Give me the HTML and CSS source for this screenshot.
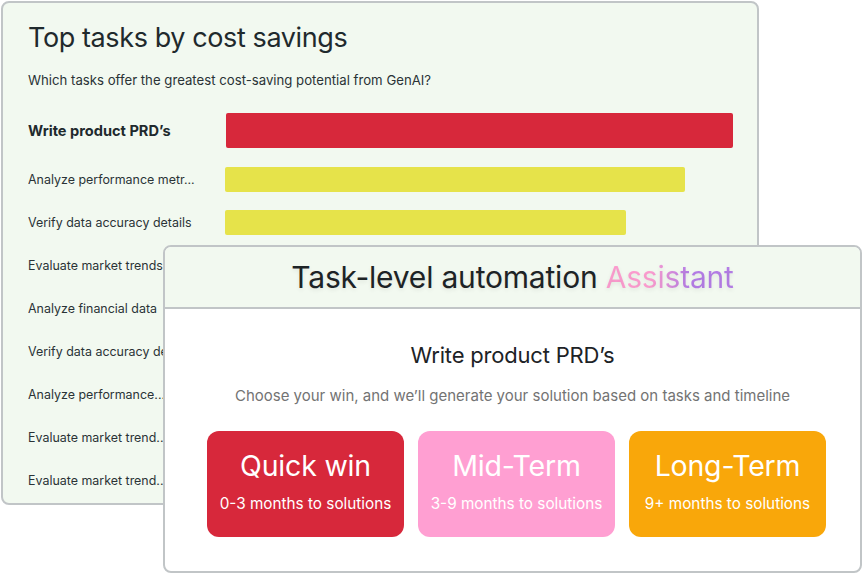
FILE: index.html
```html
<!DOCTYPE html>
<html>
<head>
<meta charset="utf-8">
<link rel="stylesheet" href="styles.css">
</head>
<body>
<div class="stage">
  <section class="chart-card">
    <h1 class="chart-title">Top tasks by cost savings</h1>
    <p class="chart-sub">Which tasks offer the greatest cost-saving potential from GenAI?</p>
    <div class="rows">
      <div class="row row-main"><span class="label label-bold">Write product PRD’s</span><span class="bar bar-red" style="width:507px"></span></div>
      <div class="row"><span class="label">Analyze performance metr...</span><span class="bar bar-yellow" style="width:460px"></span></div>
      <div class="row"><span class="label">Verify data accuracy details</span><span class="bar bar-yellow" style="width:401px"></span></div>
      <div class="row"><span class="label">Evaluate market trends</span><span class="bar bar-yellow" style="width:360px"></span></div>
      <div class="row"><span class="label">Analyze financial data</span><span class="bar bar-yellow" style="width:330px"></span></div>
      <div class="row"><span class="label">Verify data accuracy details</span><span class="bar bar-yellow" style="width:300px"></span></div>
      <div class="row"><span class="label">Analyze performance...</span><span class="bar bar-yellow" style="width:270px"></span></div>
      <div class="row"><span class="label">Evaluate market trend..</span><span class="bar bar-yellow" style="width:240px"></span></div>
      <div class="row"><span class="label">Evaluate market trend..</span><span class="bar bar-yellow" style="width:210px"></span></div>
    </div>
  </section>

  <section class="assist-card">
    <header class="assist-head">
      <h2 class="assist-title">Task-level automation <span class="grad">Assistant</span></h2>
    </header>
    <div class="assist-body">
      <h3 class="task-name">Write product PRD’s</h3>
      <p class="task-sub">Choose your win, and we’ll generate your solution based on tasks and timeline</p>
      <div class="wins">
        <div class="win win-red"><span class="win-title">Quick win</span><span class="win-sub">0-3 months to solutions</span></div>
        <div class="win win-pink"><span class="win-title">Mid-Term</span><span class="win-sub">3-9 months to solutions</span></div>
        <div class="win win-orange"><span class="win-title">Long-Term</span><span class="win-sub">9+ months to solutions</span></div>
      </div>
    </div>
  </section>
</div>
</body>
</html>
```
FILE: styles.css
```css
* { box-sizing: border-box; }
html, body { margin: 0; padding: 0; background: #ffffff; }
body {
  width: 863px;
  height: 574px;
  overflow: hidden;
  font-family: Inter, "Noto Sans", sans-serif;
  color: #1f2a2d;
}
.stage {
  position: relative;
  width: 863px;
  height: 574px;
  padding: 1px 0 0 1px;
}
.chart-card {
  width: 758px;
  height: 504px;
  background: #f2f9f0;
  border: 2px solid #c1c5c7;
  border-radius: 8px;
  padding: 19px 0 0 25px;
}
.chart-title {
  margin: 0;
  font-size: 27px;
  line-height: 32px;
  font-weight: 400;
  letter-spacing: -0.4px;
}
.chart-sub {
  margin: 17px 0 0;
  font-size: 13.2px;
  line-height: 18px;
  color: #2a3336;
}
.rows {
  margin-top: 24px;
  display: flex;
  flex-direction: column;
  gap: 18px;
}
.row {
  display: flex;
  align-items: center;
  height: 25px;
}
.row-main { height: 35px; margin-bottom: 1px; }
.label {
  width: 197px;
  flex: none;
  font-size: 12.45px;
  color: #2a3336;
  white-space: nowrap;
  overflow: hidden;
}
.label-bold { font-weight: 700; font-size: 14.6px; color: #1f2a2d; }
.bar {
  display: block;
  height: 25px;
  border-radius: 2px;
}
.row-main .bar { height: 35px; margin-left: 1px; }
.bar-red { background: #d7283b; }
.bar-yellow { background: #e6e34a; }

.assist-card {
  position: absolute;
  left: 163px;
  top: 245px;
  width: 699px;
  height: 328px;
  background: #ffffff;
  border: 2px solid #c1c5c7;
  border-radius: 8px;
  overflow: hidden;
  display: flex;
  flex-direction: column;
}
.assist-head {
  height: 62px;
  background: #f2f9f0;
  border-bottom: 2px solid #c1c5c7;
  display: flex;
  align-items: center;
  justify-content: center;
  padding-bottom: 1px;
}
.assist-title {
  margin: 0;
  font-size: 30px;
  font-weight: 400;
  letter-spacing: -0.2px;
  color: #1d2326;
  text-shadow: 0 2px 4px rgba(0,0,0,0.08);
}
.grad {
  background: linear-gradient(90deg, #ff9fd2 0%, #ff9fd2 35%, #b77fe9 65%, #b77fe9 100%);
  -webkit-background-clip: text;
  background-clip: text;
  color: transparent;
}
.assist-body {
  display: flex;
  flex-direction: column;
  align-items: center;
  padding-top: 33px;
}
.task-name {
  margin: 0;
  font-size: 22px;
  line-height: 26px;
  font-weight: 400;
  letter-spacing: -0.2px;
  color: #1d2326;
}
.task-sub {
  margin: 18px 0 0;
  font-size: 15px;
  line-height: 20px;
  color: #737373;
}
.wins {
  margin-top: 25px;
  display: flex;
  gap: 14px;
  align-self: stretch;
  padding-left: 42px;
}
.win {
  width: 197px;
  height: 106px;
  border-radius: 12px;
  display: flex;
  flex-direction: column;
  align-items: center;
  color: #ffffff;
  padding-top: 17px;
}
.win-title {
  font-size: 28.5px;
  line-height: 36px;
  letter-spacing: -0.2px;
}
.win-sub {
  margin-top: 10px;
  font-size: 15.3px;
  line-height: 20px;
}
.win-red { background: #d7283b; }
.win-pink { background: #ff9fd2; }
.win-orange { background: #f9a70a; }
```
